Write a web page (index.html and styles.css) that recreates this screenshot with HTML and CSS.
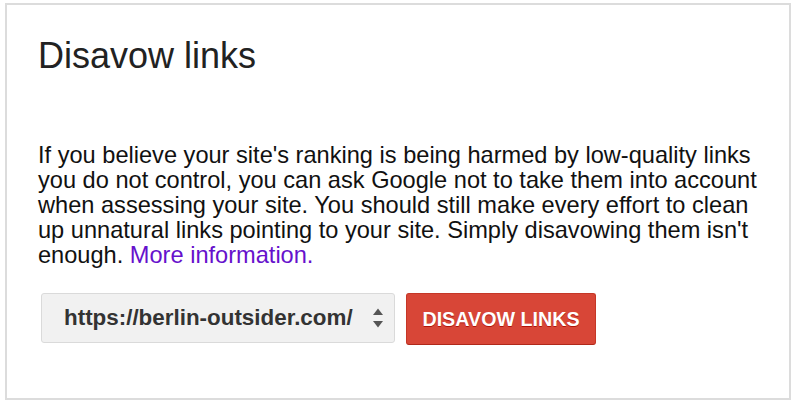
FILE: index.html
```html
<!DOCTYPE html>
<html>
<head>
<meta charset="utf-8">
<link rel="stylesheet" href="styles.css">
</head>
<body>
<div class="frame">
  <h1 class="title">Disavow links</h1>
  <p class="desc">If you believe your site's ranking is being harmed by low-quality links<br>you do not control, you can ask Google not to take them into account<br>when assessing your site. You should still make every effort to clean<br>up unnatural links pointing to your site. Simply disavowing them isn't<br>enough. <a class="more" href="#">More information.</a></p>
  <div class="actions">
    <div class="select">
      <span class="select-text">https://berlin-outsider.com/</span>
      <svg class="arrows" width="12" height="22" viewBox="0 0 12 22"><path d="M6 1.5 L11 8 L1 8 Z" fill="#555"/><path d="M6 20.5 L11 14 L1 14 Z" fill="#555"/></svg>
    </div>
    <button class="btn">DISAVOW LINKS</button>
  </div>
</div>
</body>
</html>
```

FILE: styles.css
```css
html, body {
  margin: 0;
  padding: 0;
  background: #fff;
}
body {
  font-family: "Liberation Sans", Arial, sans-serif;
  color: #222;
}
.frame {
  box-sizing: border-box;
  margin: 3px 0 0 5px;
  width: 786px;
  height: 397px;
  border: 2px solid #dcdcdc;
  padding: 31px 10px 0 31px;
}
.title {
  margin: 0;
  font-weight: normal;
  font-size: 36px;
  line-height: 40px;
  color: #222;
}
.desc {
  margin: 67px 0 0 0;
  font-size: 23.6px;
  line-height: 25px;
  color: #111;
  white-space: nowrap;
}
.more {
  color: #6611cc;
  text-decoration: none;
}
.actions {
  display: flex;
  align-items: flex-start;
  gap: 11px;
  margin-top: 25px;
  margin-left: 3px;
}
.select {
  box-sizing: border-box;
  width: 354px;
  height: 50px;
  background: #f1f1f1;
  border: 1px solid #dadada;
  border-radius: 3px;
  display: flex;
  align-items: center;
  padding-left: 22px;
  padding-right: 10px;
}
.select-text {
  font-weight: bold;
  font-size: 22.4px;
  color: #333;
  flex: 1;
}
.arrows {
  display: block;
}
.btn {
  box-sizing: border-box;
  width: 190px;
  height: 52px;
  background: #d84637;
  border: 1px solid #c53727;
  border-bottom-color: #b0281a;
  border-radius: 3px;
  color: #fff;
  font-family: "Liberation Sans", Arial, sans-serif;
  font-weight: bold;
  font-size: 19.7px;
  text-shadow: 0 1px 0 #b0150a;
  padding: 0;
}
```
